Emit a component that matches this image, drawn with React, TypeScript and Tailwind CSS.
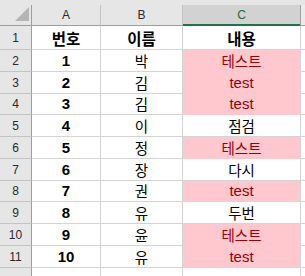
const rows: { n: string; name: string; text: string; pink: boolean }[] = [
  { n: '1', name: '박', text: '테스트', pink: true },
  { n: '2', name: '김', text: 'test', pink: true },
  { n: '3', name: '김', text: 'test', pink: true },
  { n: '4', name: '이', text: '점검', pink: false },
  { n: '5', name: '정', text: '테스트', pink: true },
  { n: '6', name: '장', text: '다시', pink: false },
  { n: '7', name: '권', text: 'test', pink: true },
  { n: '8', name: '유', text: '두번', pink: false },
  { n: '9', name: '윤', text: '테스트', pink: true },
  { n: '10', name: '유', text: 'test', pink: true },
];

const heights = ['h-[22px]', 'h-[22px]', 'h-[21px]', 'h-[22px]', 'h-[22px]', 'h-[22px]', 'h-[21px]', 'h-[22px]', 'h-[22px]', 'h-[22px]'];

const ko = "font-['Noto_Sans_CJK_KR','Noto_Sans',sans-serif]";

function RowHead({ label, h }: { label: string; h: string }) {
  return (
    <div className={`${h} w-[32px] shrink-0 flex items-center justify-center border-r border-b border-r-[#9e9e9e] border-b-[#c4c4c4] bg-[#e6e6e6] text-[12px] leading-[16px] text-[#2a2a2a] font-['Liberation_Sans',sans-serif]`}>
      {label}
    </div>
  );
}

export default function App() {
  return (
    <div className="w-[305px] h-[276px] overflow-hidden bg-white">
      <div className="h-[5px] bg-[#e6e6e6]" />
      <div className="flex h-[21px] bg-[#e6e6e6] font-['Liberation_Sans',sans-serif] text-[12px] leading-[16px] text-[#2a2a2a]">
        <div className="relative w-[32px] shrink-0 border-r border-b border-[#9e9e9e]">
          <svg className="absolute left-[15px] top-[2px]" width="14" height="14" viewBox="0 0 14 14">
            <polygon points="14,0 14,14 0,14" fill="#b5b5b5" />
          </svg>
        </div>
        <div className="w-[69px] shrink-0 flex items-center justify-center border-r border-b border-r-[#c4c4c4] border-b-[#9e9e9e]">A</div>
        <div className="w-[82px] shrink-0 flex items-center justify-center border-r border-b border-r-[#c4c4c4] border-b-[#9e9e9e]">B</div>
        <div className="w-[117px] shrink-0 flex items-center justify-center bg-[#d2d2d2] border-b-2 border-[#217346] text-[#1e6b45]">C</div>
        <div className="flex-1 border-l border-b border-l-[#9e9e9e] border-b-[#9e9e9e] bg-[#ebebeb]" />
      </div>

      <div className="flex h-[24px]">
        <RowHead label="1" h="h-[24px]" />
        <div className={`w-[69px] shrink-0 flex items-center justify-center border-r border-b border-[#d4d4d4] text-[15.5px] leading-[18px] font-bold text-black ${ko}`}>번호</div>
        <div className={`w-[82px] shrink-0 flex items-center justify-center border-r border-b border-[#d4d4d4] text-[15.5px] leading-[18px] font-bold text-black ${ko}`}>이름</div>
        <div className={`w-[118px] shrink-0 flex items-center justify-center border-r border-b border-[#d4d4d4] text-[15.5px] leading-[18px] font-bold text-black ${ko}`}>내용</div>
        <div className="flex-1 border-b border-[#d4d4d4]" />
      </div>

      {rows.map((r, i) => (
        <div key={i} className={`flex ${heights[i]}`}>
          <RowHead label={String(i + 2)} h={heights[i]} />
          <div className="w-[69px] shrink-0 flex items-center justify-center border-r border-b border-[#d4d4d4] text-[15px] leading-[18px] font-bold text-black font-['Liberation_Sans',sans-serif]">
            {r.n}
          </div>
          <div className={`w-[82px] shrink-0 flex items-center justify-center border-r border-b border-[#d4d4d4] text-[14.5px] leading-[18px] text-black ${ko}`}>
            {r.name}
          </div>
          <div
            className={`w-[118px] shrink-0 flex items-center justify-center border-r border-[#d4d4d4] leading-[18px] ${
              r.text === 'test' ? "text-[15px] font-['Liberation_Sans',sans-serif]" : `text-[14.5px] ${ko}`
            } ${r.pink ? 'bg-[#ffc7ce] text-[#9c0006] border-b border-b-[#ffc7ce]' : 'border-b text-black'}`}
          >
            {r.text}
          </div>
          <div className="flex-1 border-b border-[#d4d4d4]" />
        </div>
      ))}

      <div className="flex h-[20px]">
        <RowHead label="" h="h-[20px]" />
        <div className="w-[69px] shrink-0 border-r border-[#d4d4d4]" />
        <div className="w-[82px] shrink-0 border-r border-[#d4d4d4]" />
        <div className="w-[118px] shrink-0 border-r border-[#d4d4d4]" />
      </div>
    </div>
  );
}
